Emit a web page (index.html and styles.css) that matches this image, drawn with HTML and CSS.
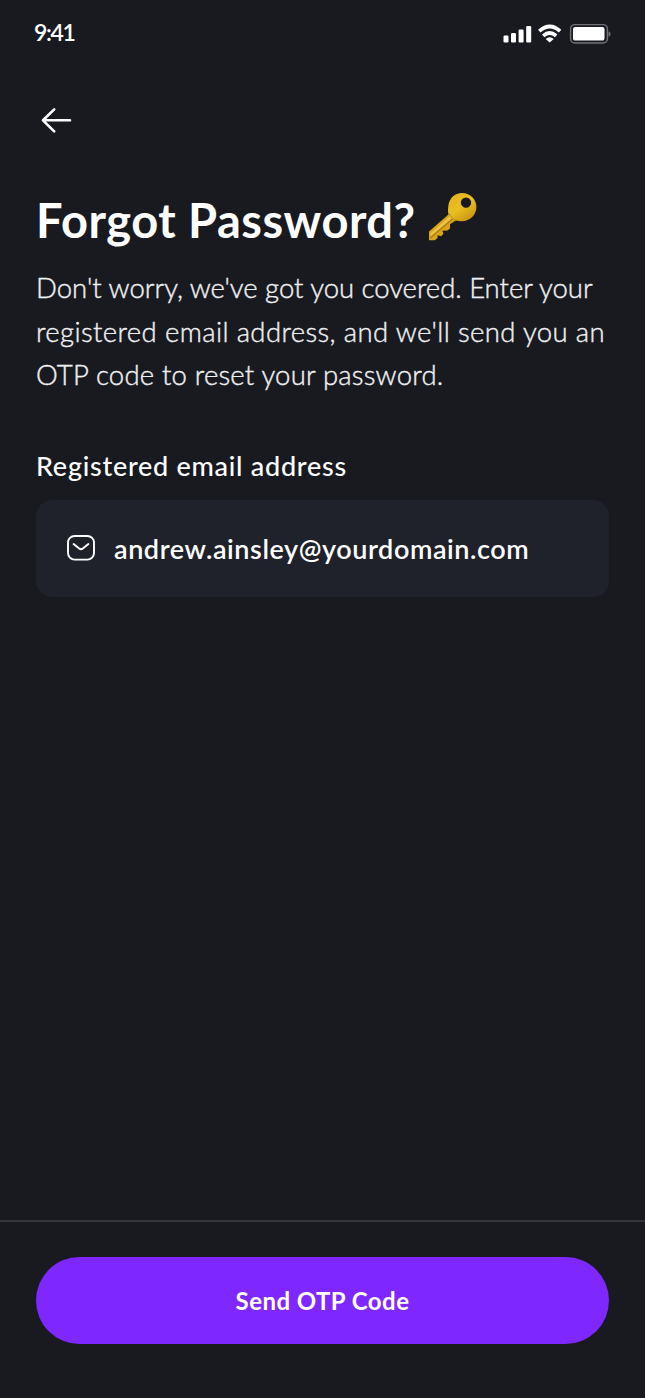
FILE: index.html
```html
<!DOCTYPE html>
<html lang="en">
<head>
<meta charset="utf-8">
<title>Forgot Password</title>
<link rel="stylesheet" href="styles.css">
</head>
<body>
<div class="screen">
  <header class="status">
    <span class="time">9:41</span>
    <svg class="status-icons" width="110" height="24" viewBox="502 22 110 24" fill="#fff">
      <rect x="503.5" y="35.5" width="5" height="7" rx="1.2"/>
      <rect x="511" y="33" width="5" height="9.5" rx="1.2"/>
      <rect x="518.6" y="29.5" width="5" height="13" rx="1.2"/>
      <rect x="526.2" y="26" width="5" height="16.5" rx="1.2"/>
      <g fill="none" stroke="#fff" stroke-width="3.7">
        <path d="M539.3 31.2Q549.7 21.9 560.1 31.2"/>
        <path d="M543.2 35.8Q549.7 30.2 556.2 35.8"/>
      </g>
      <path d="M549.7 42.6L545.7 38.9Q549.7 35.7 553.7 38.9Z"/>
      <rect x="570.6" y="24.6" width="36.8" height="18.4" rx="4.2" fill="none" stroke="#707176" stroke-width="1.4"/>
      <rect x="573" y="27" width="31.5" height="13.6" rx="2.2"/>
      <path d="M608.5 31.2Q610.6 32 610.6 34Q610.6 36 608.5 36.8Z" fill="#707176"/>
    </svg>
  </header>
  <nav class="nav">
    <svg width="34" height="28" viewBox="40 106 34 28" fill="none" stroke="#fff" stroke-width="2.6" stroke-linecap="round" stroke-linejoin="round"><path d="M70 120.3H43M54.2 109.4L43 120.3L54.2 131.4"/></svg>
  </nav>
  <main class="main">
    <div class="heading">
      <h1 class="title">Forgot Password?</h1>
      <svg class="key" width="50" height="50" viewBox="428 191 50 50">
        <defs><linearGradient id="gold" x1="0" y1="0" x2="0.7" y2="1"><stop offset="0" stop-color="#e2b019"/><stop offset=".55" stop-color="#e9c020"/><stop offset="1" stop-color="#cb9412"/></linearGradient></defs>
        <path d="M449 214L429 231.5V240.2H434.8L437.6 238V235.2L441.2 236.2L443.4 233.8L442.4 230.8L447.4 230.6L450 228.4V224.2L456.2 220.2Z" fill="#d9a41b"/>
        <path d="M450 216L430.2 233.6L430.4 236.2L453 217.4Z" fill="#ecc540"/>
        <path d="M430.2 238.2L452.5 219" stroke="#a97913" stroke-width="1.1"/>
        <path fill-rule="evenodd" d="M462 193C470.5 193 476.4 199.5 476.4 207C476.4 215 470.2 221.2 461.8 221.2C457.5 221.2 453.8 220.4 450.8 218C448 215.5 447.6 211 448.4 205.6C449.5 198 454.6 193 462 193ZM466 197.4A5.2 5.2 0 1 0 466 207.8A5.2 5.2 0 1 0 466 197.4Z" fill="url(#gold)"/>
        <path d="M449 213.5Q452 220 458.5 220.6" fill="none" stroke="#b88616" stroke-width="1"/>
      </svg>
    </div>
    <p class="intro">
      <span class="line line-a">Don't worry, we've got you covered. Enter your</span>
      <span class="line line-b">registered email address, and we'll send you an</span>
      <span class="line line-c">OTP code to reset your password.</span>
    </p>
    <div class="label">Registered email address</div>
    <div class="field">
      <svg class="mail" width="28" height="26" viewBox="0 0 28 26" fill="none" stroke="#fff" stroke-width="1.9" stroke-linecap="round" stroke-linejoin="round"><rect x="1" y="1" width="26" height="23.6" rx="6.6"/><path d="M6.6 9L12.2 13.5Q14 14.9 15.8 13.5L21.4 9"/></svg>
      <span class="email">andrew.ainsley@yourdomain.com</span>
    </div>
  </main>
  <footer class="footer">
    <button class="send">Send OTP Code</button>
  </footer>
</div>
</body>
</html>
```
FILE: styles.css
```css
* { box-sizing: border-box; }
body { margin: 0; background: #181a20; color: #fff; font-family: Lato, "Open Sans", sans-serif; }
svg { display: block; flex: none; }
.screen { display: flex; flex-direction: column; height: 1398px; overflow: hidden; }
.status { display: flex; justify-content: space-between; padding: 22px 33px 0 34px; height: 106px; }
.time { font-size: 23px; line-height: 20px; font-weight: 600; letter-spacing: -1.3px; }
.nav { padding-left: 40px; height: 84px; }
.main { flex: 1; padding: 0 36px; }
.heading { display: flex; gap: 14px; height: 76px; }
.title { margin: 0; width: 378px; font-size: 47px; line-height: 60px; font-weight: 700; letter-spacing: 0.5px; white-space: nowrap; }
.key { margin-top: 1px; }
.intro { margin: 0; font-size: 27.5px; line-height: 43.5px; font-weight: 300; color: #f0f0f1; -webkit-text-stroke: 0.4px #f0f0f1; }
.line { display: block; white-space: nowrap; }
.line-a { letter-spacing: -0.02px; }
.line-b { letter-spacing: 0.38px; }
.line-c { letter-spacing: 0.2px; }
.label { margin-top: 50px; height: 37px; font-size: 27px; line-height: 38px; font-weight: 500; letter-spacing: 0.73px; white-space: nowrap; }
.field { display: flex; align-items: center; gap: 19px; margin-top: 16px; height: 97px; padding-left: 31px; border-radius: 16px; background: #1f222a; }
.email { padding-top: 2px; font-size: 27px; line-height: 36px; font-weight: 600; letter-spacing: 0.58px; white-space: nowrap; }
.footer { height: 178px; padding: 35px 36px 0; border-top: 2px solid #34363b; }
.send { display: block; width: 100%; height: 87px; border: 0; border-radius: 44px; background: #7f27ff; color: #fff; font: 700 24px/30px Lato, "Open Sans", sans-serif; letter-spacing: 0.45px; }
```
